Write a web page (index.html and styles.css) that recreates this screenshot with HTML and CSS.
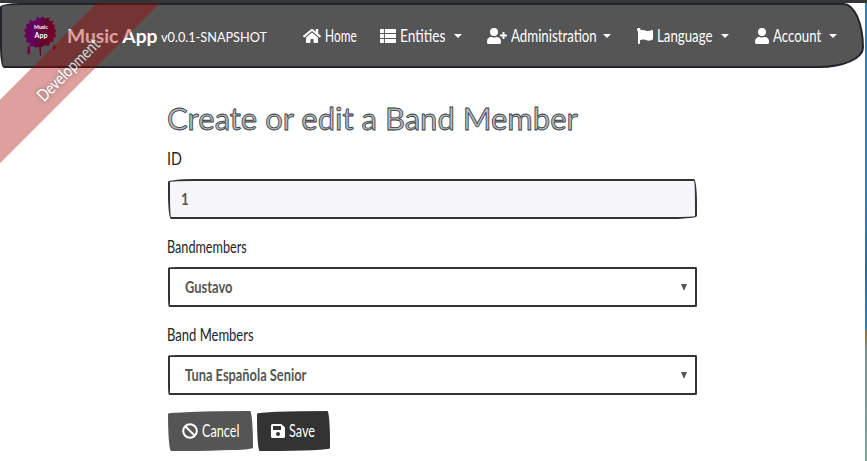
FILE: index.html
```html
<!DOCTYPE html>
<html lang="en">
<head>
<meta charset="utf-8">
<title>Music App</title>
<link rel="stylesheet" href="styles.css">
</head>
<body>
<div class="page">
  <div class="ribbon"><span>Development</span></div>
  <nav class="navbar">
    <a class="brand">
      <svg class="logo" viewBox="0 0 36 42">
        <defs><linearGradient id="ink" x1="0" y1="0.3" x2="1" y2="0.6"><stop offset="0" stop-color="#65004a"/><stop offset=".3" stop-color="#650068"/><stop offset=".6" stop-color="#600828"/><stop offset="1" stop-color="#85002a"/></linearGradient></defs>
        <path fill="url(#ink)" d="M13 4l1-3 3 2 3-2 2 2 5-1 0 4 4-1-1 4 3 1-1 3 2 3-1 3 1 3-3 2 0 4-3 0-2 4-4-1-2 2-2 0 0 10-1 0-1-10-4 1-2-2-4 1 0-4-4-1 1-4-3-2 2-3-2-4 3-2-1-4 4-1 0-4 4 2z"/>
        <path fill="#78003a" d="M5 31c2 4 2 10 0 10s-2-6 0-10zM32 31c2 2 2 4 0 5s-2-3 0-5z"/>
        <text x="18" y="14.5" class="logo-small">Music</text>
        <text x="18" y="23.5" class="logo-big">App</text>
      </svg>
      <span class="name">Music App</span><span class="version">v0.0.1-SNAPSHOT</span>
    </a>
    <ul class="menu">
      <li class="home"><svg width="18" height="16" viewBox="0 0 576 512"><path d="M280 148 96 300v164c0 9 7 16 16 16h112c9 0 16-7 16-16v-96c0-9 7-16 16-16h64c9 0 16 7 16 16v96c0 9 7 16 16 16h112c9 0 16-7 16-16V300L296 148q-8-6-16 0zM572 251l-84-69V44c0-7-5-12-12-12h-56c-7 0-12 5-12 12v72l-90-74q-30-24-60 0L4 251q-8 7-2 17l26 31q8 8 17 2L280 107q8-6 16 0l235 194q9 6 17-2l26-31q6-10-2-17z"/></svg><span>Home</span></li>
      <li class="entities"><svg width="16" height="16" viewBox="0 0 512 512"><path d="M0 56q0-24 24-24h101v128H0zM0 192h125v128H0zM0 352h125v128H24q-24 0-24-24zM157 32h331q24 0 24 24v104H157zM157 192h355v128H157zM157 352h355v104q0 24-24 24H157z"/></svg><span>Entities</span><i></i></li>
      <li class="admin"><svg width="20" height="16" viewBox="0 0 640 512"><path d="M624 208h-64v-64c0-9-7-16-16-16h-32c-9 0-16 7-16 16v64h-64c-9 0-16 7-16 16v32c0 9 7 16 16 16h64v64c0 9 7 16 16 16h32c9 0 16-7 16-16v-64h64c9 0 16-7 16-16v-32c0-9-7-16-16-16zM224 256a128 128 0 1 0 0-256 128 128 0 0 0 0 256zm90 32h-17q-73 34-146 0h-17C60 288 0 348 0 422v42c0 27 21 48 48 48h352c27 0 48-21 48-48v-42c0-74-60-134-134-134z"/></svg><span>Administration</span><i></i></li>
      <li class="language"><svg width="16" height="16" viewBox="0 0 512 512"><path d="M350 99c-55 0-101-35-170-35-26 0-50 5-72 12a56 56 0 1 0-76 28v384c0 13 11 24 24 24h16c13 0 24-11 24-24v-94c28-12 64-23 115-23 56 0 101 35 171 35 49 0 89-17 117-36q13-9 13-27V96c0-23-24-39-45-29-34 16-76 32-117 32z"/></svg><span>Language</span><i></i></li>
      <li class="account"><svg width="14" height="16" viewBox="0 0 448 512"><path d="M224 256a128 128 0 1 0 0-256 128 128 0 0 0 0 256zm90 32h-17q-73 34-146 0h-17C60 288 0 348 0 422v42c0 27 21 48 48 48h352c27 0 48-21 48-48v-42c0-74-60-134-134-134z"/></svg><span>Account</span><i></i></li>
    </ul>
  </nav>
  <main>
    <h2>Create or edit a Band Member</h2>
    <label><span class="l-id">ID</span></label>
    <div class="control readonly"><span>1</span></div>
    <label><span class="l-one">Bandmembers</span></label>
    <div class="control select"><span class="v-one">Gustavo</span><b></b></div>
    <label><span class="l-two">Band Members</span></label>
    <div class="control select"><span class="v-two">Tuna Española Senior</span><b></b></div>
    <div class="buttons">
      <button class="cancel"><svg width="16" height="16" viewBox="0 0 16 16"><g fill="none" stroke="#fff" stroke-width="2"><circle cx="8" cy="8" r="6.8"/><path d="M3.2 3.2l9.6 9.6"/></g></svg><span>Cancel</span></button>
      <button class="save"><svg width="14" height="16" viewBox="0 0 448 512"><path fill-rule="evenodd" d="M434 130l-84-84q-14-14-34-14H48Q0 32 0 80v352q0 48 48 48h352q48 0 48-48V164q0-20-14-34zM224 416a64 64 0 1 1 0-128 64 64 0 0 1 0 128zM320 112v100q0 12-12 12H76q-12 0-12-12V108q0-12 12-12h229q15 0 15 16z"/></svg><span>Save</span></button>
    </div>
  </main>
</div>
<div class="edge"></div>
</body>
</html>
```
FILE: styles.css
```css
* { box-sizing: border-box; }
body {
  margin: 0;
  height: 461px;
  overflow: hidden;
  display: flex;
  border-top: 3px solid #343539;
  background: #fff;
  color: #212529;
  font: 17px/24px Lato, sans-serif;
}
.page { position: relative; width: 865px; overflow: hidden; }
.edge { width: 2px; background: linear-gradient(#2980c4 0 42%, #286a9c 58%, #2980c4 71%, #9b762f 72%, #739293 76%, #78a797); }
.navbar {
  display: flex;
  align-items: center;
  width: 864px;
  height: 65px;
  padding-left: 22px;
  border: 2px solid #212529;
  border-radius: 25px 25px 55px 5px / 5px 55px 25px 25px;
  background: #555;
  color: #fff;
}
.brand { display: flex; flex: none; align-items: center; width: 279px; white-space: nowrap; }
.logo { flex: none; width: 34px; height: 41px; margin: 0 9px 0 0; }
.logo text { fill: #fff; font-family: Lato, sans-serif; font-weight: 700; text-anchor: middle; }
.logo .logo-small { font-size: 5.5px; }
.logo .logo-big { font-size: 7.5px; }
.name { flex: none; width: 94px; font: 700 19.2px/24px Lato, sans-serif; }
.version { font: 12.7px/24px Lato, sans-serif; padding-top: 2px; }
.menu { display: flex; margin: 0; padding: 0; list-style: none; }
.menu li { display: flex; align-items: center; flex: none; white-space: nowrap; }
.menu svg { flex: none; margin-right: 4px; fill: #fff; }
.menu i { flex: none; margin-left: 8px; border: 4.8px solid transparent; border-top-color: #fff; border-bottom: 0; }

/* condensed lettering: each width is that of the narrowed word */
.menu span, label span, .control span, button span {
  display: inline-block;
  flex: none;
  white-space: nowrap;
  text-align: left;
  transform: scaleX(.78);
  transform-origin: 0 50%;
}
.home { width: 77px; }
.menu .home span { width: 32px; transform: scaleX(.7); }
.entities { width: 107px; }
.menu .entities span { width: 46px; transform: scaleX(.81); }
.admin { width: 150px; }
.admin span { width: 84px; }
.language { width: 118px; }
.language span { width: 56px; }
.account span { width: 48px; }
label .l-id { transform: scaleX(.84); }
label .l-one { transform: scaleX(.743); }
label .l-two { transform: scaleX(.765); }
.control .v-one { transform: scaleX(.76); }
.control .v-two { transform: scaleX(.755); }
.cancel span, .save span { transform: scaleX(.745); }
.ribbon {
  position: absolute;
  z-index: 2;
  left: -61px;
  top: 41.5px;
  width: 250px;
  height: 45px;
  background: rgba(170, 0, 0, .5);
  color: #fff;
  opacity: .75;
  text-align: center;
  line-height: 45px;
  transform: rotate(-45deg);
  text-shadow: 0 0 5px #444;
}
.ribbon span { display: inline-block; transform: translate(1px, 4px) scaleX(.8); }
main { width: 530px; margin: 31px 0 0 167px; }
h2 {
  height: 38px;
  margin: 0 0 10px;
  color: #b8bcbe;
  font: 400 31px/38px Lato, sans-serif;
  -webkit-text-stroke: .8px #30363b;
  white-space: nowrap;
}
label { display: block; height: 24px; margin-bottom: 8px; }
.control {
  display: flex;
  align-items: center;
  height: 40px;
  margin: 0 0 16px 1px;
  width: 529px;
  padding: 0 11px;
  border: 2px solid #333;
  border-radius: 25px 3px 25px 3px / 3px 25px 3px 25px;
  color: #555;
  font-weight: 700;
}
.readonly { background: #f7f7f9; }
.select { justify-content: space-between; padding: 0 8px 0 15px; border-radius: 10px 1px 2px 1px / 1px 2px 1px 10px; }
.select b { border: 3.5px solid transparent; border-top: 7px solid #555; border-bottom: 0; }
.buttons { display: flex; gap: 4px; padding-left: 1px; }
button {
  display: flex;
  align-items: center;
  height: 40px;
  padding: 0 14px;
  border: 0;
  border-radius: 80px 3px 70px 3px / 3px 35px 3px 37px;
  color: #fff;
  font: inherit;
}
button svg { flex: none; margin-right: 4px; fill: #fff; }
.cancel { width: 85px; background: #555; }
.save { width: 73px; background: #333; }
```
